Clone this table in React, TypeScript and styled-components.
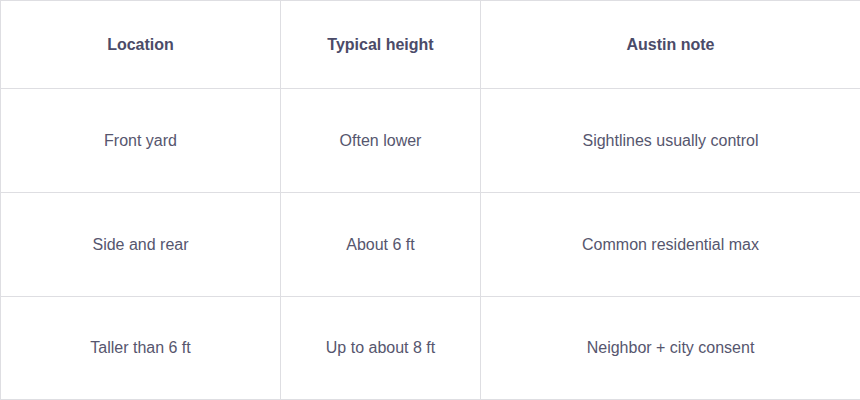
import React from "react";
import styled, { createGlobalStyle } from "styled-components";

const GlobalStyle = createGlobalStyle`
  html, body {
    margin: 0;
    padding: 0;
    background: #ffffff;
  }
  body {
    font-family: "Liberation Sans", Arial, sans-serif;
  }
`;

const Table = styled.table`
  width: 860px;
  border-collapse: collapse;
  table-layout: fixed;
  font-family: "Liberation Sans", Arial, sans-serif;
  font-size: 16px;
`;

const HeadCell = styled.th<{ $w: number }>`
  width: ${(p) => p.$w}px;
  height: 88px;
  padding: 0;
  border: 1px solid #dedee2;
  text-align: center;
  vertical-align: middle;
  font-weight: 700;
  color: #4b4b68;
  box-sizing: border-box;
`;

const Row = styled.tr`
  &:last-child td {
    height: 103px;
  }
`;

const Cell = styled.td`
  height: 104px;
  padding: 0;
  border: 1px solid #dedee2;
  text-align: center;
  vertical-align: middle;
  font-weight: 400;
  color: #56566e;
  box-sizing: border-box;
`;

const columns = [
  { label: "Location", width: 280 },
  { label: "Typical height", width: 200 },
  { label: "Austin note", width: 380 },
];

const rows = [
  ["Front yard", "Often lower", "Sightlines usually control"],
  ["Side and rear", "About 6 ft", "Common residential max"],
  ["Taller than 6 ft", "Up to about 8 ft", "Neighbor + city consent"],
];

export default function App() {
  return (
    <>
      <GlobalStyle />
      <Table>
        <thead>
          <tr>
            {columns.map((c) => (
              <HeadCell key={c.label} $w={c.width}>
                {c.label}
              </HeadCell>
            ))}
          </tr>
        </thead>
        <tbody>
          {rows.map((r) => (
            <Row key={r[0]}>
              {r.map((v) => (
                <Cell key={v}>{v}</Cell>
              ))}
            </Row>
          ))}
        </tbody>
      </Table>
    </>
  );
}
